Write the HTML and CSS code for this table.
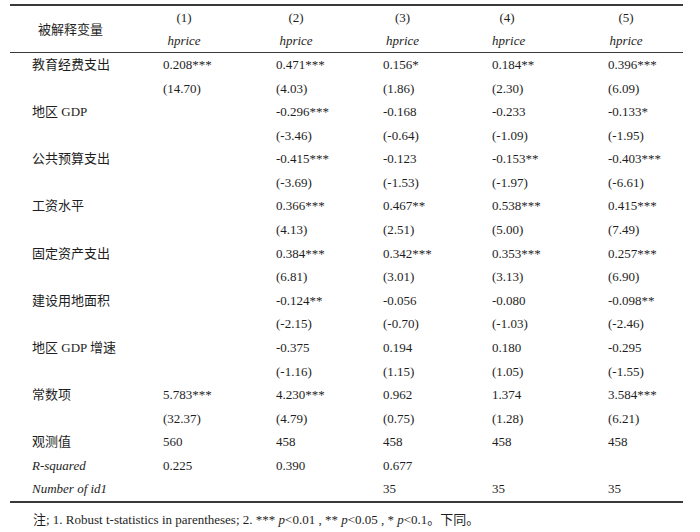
FILE: index.html
```html
<!DOCTYPE html>
<html lang="en">
<head>
<meta charset="utf-8">
<link rel="stylesheet" href="styles.css">
</head>
<body>
<div class="table">
  <div class="row head">
    <div class="label">被解释变量</div>
    <div class="hc"><div class="hbox"><div>(1)</div><div class="it">hprice</div></div></div>
    <div class="hc"><div class="hbox"><div>(2)</div><div class="it">hprice</div></div></div>
    <div class="hc"><div class="hbox"><div>(3)</div><div class="it">hprice</div></div></div>
    <div class="hc"><div class="hbox"><div>(4)</div><div class="it">hprice</div></div></div>
    <div class="hc"><div class="hbox"><div>(5)</div><div class="it">hprice</div></div></div>
  </div>
  <div class="body">
    <div class="row"><div class="label">教育经费支出</div><div>0.208***</div><div>0.471***</div><div>0.156*</div><div>0.184**</div><div>0.396***</div></div>
    <div class="row"><div class="label"></div><div>(14.70)</div><div>(4.03)</div><div>(1.86)</div><div>(2.30)</div><div>(6.09)</div></div>
    <div class="row"><div class="label">地区 GDP</div><div></div><div>-0.296***</div><div>-0.168</div><div>-0.233</div><div>-0.133*</div></div>
    <div class="row"><div class="label"></div><div></div><div>(-3.46)</div><div>(-0.64)</div><div>(-1.09)</div><div>(-1.95)</div></div>
    <div class="row"><div class="label">公共预算支出</div><div></div><div>-0.415***</div><div>-0.123</div><div>-0.153**</div><div>-0.403***</div></div>
    <div class="row"><div class="label"></div><div></div><div>(-3.69)</div><div>(-1.53)</div><div>(-1.97)</div><div>(-6.61)</div></div>
    <div class="row"><div class="label">工资水平</div><div></div><div>0.366***</div><div>0.467**</div><div>0.538***</div><div>0.415***</div></div>
    <div class="row"><div class="label"></div><div></div><div>(4.13)</div><div>(2.51)</div><div>(5.00)</div><div>(7.49)</div></div>
    <div class="row"><div class="label">固定资产支出</div><div></div><div>0.384***</div><div>0.342***</div><div>0.353***</div><div>0.257***</div></div>
    <div class="row"><div class="label"></div><div></div><div>(6.81)</div><div>(3.01)</div><div>(3.13)</div><div>(6.90)</div></div>
    <div class="row"><div class="label">建设用地面积</div><div></div><div>-0.124**</div><div>-0.056</div><div>-0.080</div><div>-0.098**</div></div>
    <div class="row"><div class="label"></div><div></div><div>(-2.15)</div><div>(-0.70)</div><div>(-1.03)</div><div>(-2.46)</div></div>
    <div class="row"><div class="label">地区 GDP 增速</div><div></div><div>-0.375</div><div>0.194</div><div>0.180</div><div>-0.295</div></div>
    <div class="row"><div class="label"></div><div></div><div>(-1.16)</div><div>(1.15)</div><div>(1.05)</div><div>(-1.55)</div></div>
    <div class="row"><div class="label">常数项</div><div>5.783***</div><div>4.230***</div><div>0.962</div><div>1.374</div><div>3.584***</div></div>
    <div class="row"><div class="label"></div><div>(32.37)</div><div>(4.79)</div><div>(0.75)</div><div>(1.28)</div><div>(6.21)</div></div>
    <div class="row"><div class="label">观测值</div><div>560</div><div>458</div><div>458</div><div>458</div><div>458</div></div>
    <div class="row"><div class="label it">R-squared</div><div>0.225</div><div>0.390</div><div>0.677</div><div></div><div></div></div>
    <div class="row"><div class="label it">Number of id1</div><div></div><div></div><div>35</div><div>35</div><div>35</div></div>
  </div>
</div>
<p class="note">注; 1. Robust t-statistics in parentheses; 2. *** <span class="it">p</span>&lt;0.01 , ** <span class="it">p</span>&lt;0.05 , * <span class="it">p</span>&lt;0.1。下同。</p>
</body>
</html>
```

FILE: styles.css
```css
html, body {
  margin: 0;
  padding: 0;
  background: #ffffff;
}

body {
  font-family: "Liberation Serif", "Times New Roman", "Noto Sans CJK SC", serif;
  font-size: 13px;
  color: #1e1e1e;
}

.table {
  width: 673px;
  margin: 4px 0 0 10px;
  border-top: 2px solid #3a3a3a;
  border-bottom: 2px solid #3a3a3a;
}

.row {
  display: grid;
  grid-template-columns: 153px 113px 107px 109px 116px 75px;
  height: 23.58px;
  line-height: 23.58px;
  white-space: nowrap;
}

.label {
  padding-left: 22px;
}

.head {
  height: 46px;
  line-height: 23px;
  border-bottom: 1px solid #3a3a3a;
  align-items: center;
}

.head .label {
  padding-left: 28px;
  line-height: 20px;
  padding-top: 2px;
}

.hbox {
  text-align: center;
  width: 42px;
}

.hc:nth-child(3) .hbox { width: 40px; }
.hc:nth-child(4) .hbox { width: 39px; }
.hc:nth-child(5) .hbox { width: 30px; }
.hc:nth-child(6) .hbox { width: 36px; }

.it {
  font-style: italic;
}

.note {
  margin: 7px 0 0 33px;
  line-height: 20px;
  white-space: nowrap;
}
```
